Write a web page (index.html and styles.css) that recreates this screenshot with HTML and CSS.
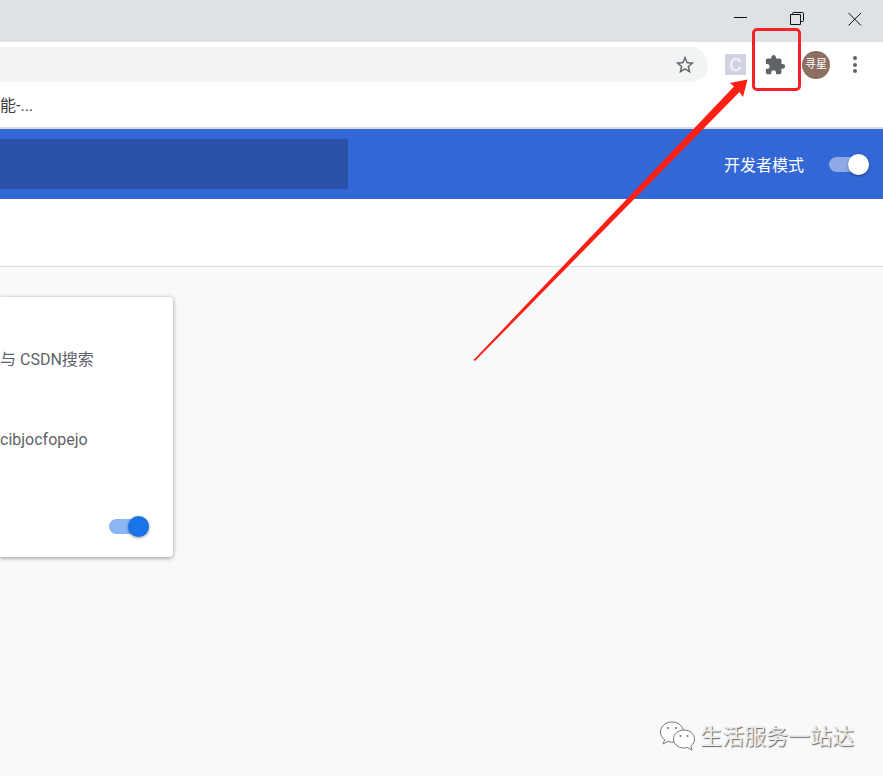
FILE: index.html
```html
<!DOCTYPE html>
<html lang="zh">
<head>
<meta charset="utf-8">
<title>扩展程序</title>
<link rel="stylesheet" href="styles.css">
</head>
<body>
<div class="page">
  <header class="titlebar">
    <button class="win-btn" aria-label="最小化">
      <svg width="14" height="14" viewBox="0 0 14 14"><path d="M0 5.500h13" class="win-stroke"/></svg>
    </button>
    <button class="win-btn" aria-label="还原">
      <svg width="14" height="14" viewBox="0 0 14 14"><path d="M-.5 2.500h10v10h-10z M1.500 2.500V1.500a1 1 0 0 1 1-1h9a1 1 0 0 1 1 1v7a1 1 0 0 1-1 1h-2" class="win-stroke"/></svg>
    </button>
    <button class="win-btn" aria-label="关闭">
      <svg width="14" height="14" viewBox="0 0 14 14"><path d="M.5 1l12.500 12.500M13 1L.5 13.500" class="win-stroke"/></svg>
    </button>
  </header>

  <div class="toolbar">
    <div class="omnibox">
      <svg class="star" width="22" height="22" viewBox="0 0 24 24"><path d="M22 9.240l-7.190-.62L12 2 9.190 8.630 2 9.240l5.460 4.730L5.820 21 12 17.270 18.180 21l-1.630-7.030L22 9.240zM12 15.400l-3.760 2.270 1-4.280-3.320-2.880 4.380-.38L12 6.100l1.710 4.040 4.380.38-3.320 2.880 1 4.280L12 15.400z"/></svg>
    </div>
    <div class="ext-c">C</div>
    <svg class="puzzle" width="22" height="22" viewBox="0 0 24 24"><path d="M20.500 11H19V7c0-1.100-.9-2-2-2h-4V3.500C13 2.120 11.880 1 10.500 1S8 2.120 8 3.500V5H4c-1.100 0-1.990.9-1.990 2v3.800H3.500c1.490 0 2.700 1.210 2.700 2.700s-1.210 2.700-2.700 2.700H2V20c0 1.100.9 2 2 2h3.800v-1.500c0-1.490 1.210-2.700 2.700-2.700 1.490 0 2.700 1.210 2.700 2.700V22H17c1.100 0 2-.9 2-2v-4h1.500c1.380 0 2.500-1.120 2.500-2.500S21.880 11 20.500 11z"/></svg>
    <div class="avatar">寻星</div>
    <div class="kebab"><i></i><i></i><i></i></div>
  </div>

  <div class="bookmarks">能-...</div>

  <div class="ext-header">
    <div class="search"></div>
    <div class="devmode">
      <span>开发者模式</span>
      <span class="toggle toggle-white"><i></i></span>
    </div>
  </div>

  <div class="subbar"></div>

  <main class="content">
    <article class="card">
      <p class="desc">与 CSDN搜索</p>
      <p class="ext-id">cibjocfopejo</p>
      <div class="card-foot">
        <span class="toggle toggle-blue"><i></i></span>
      </div>
    </article>
  </main>

  <div class="highlight"></div>
  <svg class="arrow" width="883" height="776" viewBox="0 0 883 776">
    <polygon points="473.500,360 734,86.500 730,83 747.500,79.500 743,97 739.500,92 475,361"/>
  </svg>

  <div class="watermark">
    <svg width="38" height="36" viewBox="0 0 38 36">
      <path d="M14 3C7.400 3 2.500 7.500 2.500 13c0 3.200 1.600 5.800 4.200 7.800L5 25l5-2.500c1.300.4 2.600.6 4 .6 6.600 0 11.500-4.500 11.500-10S20.600 3 14 3z" class="wm-bubble"/>
      <path d="M26 11c-5.800 0-10.500 4-10.500 9s4.700 9 10.500 9c1.200 0 2.400-.2 3.500-.5L34 31l-1.200-4c2.300-1.700 3.700-4.100 3.700-7 0-5-4.700-9-10.500-9z" class="wm-bubble"/>
      <circle cx="10" cy="9" r="1.100" class="wm-dot"/><circle cx="18" cy="9" r="1.100" class="wm-dot"/>
      <circle cx="22.500" cy="17" r="1.100" class="wm-dot"/><circle cx="29.500" cy="17" r="1.100" class="wm-dot"/>
    </svg>
    <span>生活服务一站达</span>
  </div>
</div>
</body>
</html>
```
FILE: styles.css
```css
* { box-sizing: border-box; }
html, body { margin: 0; padding: 0; }
body {
  font-family: Roboto, "Noto Sans CJK SC", sans-serif;
  background: #f8f9fa;
}
.page {
  position: relative;
  width: 883px;
  height: 776px;
  overflow: hidden;
  display: flex;
  flex-direction: column;
}
.titlebar {
  height: 42px;
  background: #dee1e6;
  display: flex;
  justify-content: flex-end;
  padding: 12px 21px 0 0;
  gap: 43px;
}
.win-btn {
  width: 14px;
  height: 14px;
  padding: 0;
  border: 0;
  background: none;
  display: block;
}
.win-btn svg { display: block; overflow: visible; }
.win-stroke { fill: none; stroke: #111; stroke-width: 1; }
.toolbar {
  height: 40px;
  padding-top: 5px;
  background: #fff;
  display: flex;
  align-items: center;
}
.omnibox {
  width: 708px;
  height: 35px;
  background: #f1f3f4;
  border-radius: 0 18px 18px 0;
  display: flex;
  align-items: center;
  justify-content: flex-end;
  padding-right: 12px;
}
.star { fill: #5f6368; display: block; }
.ext-c {
  width: 21px;
  height: 21px;
  margin-left: 17px;
  background: #d2d3e2;
  color: #f6f6fa;
  font-size: 19px;
  line-height: 21px;
  text-align: center;
}
.puzzle { fill: #5f6368; margin-left: 18px; display: block; }
.avatar {
  width: 28px;
  height: 28px;
  margin-left: 16px;
  border-radius: 50%;
  background: #8d6e63;
  color: #fff;
  font-size: 11px;
  line-height: 28px;
  text-align: center;
}
.kebab {
  margin-left: 23px;
  display: flex;
  flex-direction: column;
  gap: 2.500px;
}
.kebab i {
  display: block;
  width: 4px;
  height: 4px;
  border-radius: 50%;
  background: #5f6368;
}
.bookmarks {
  height: 45px;
  background: #fff;
  padding-top: 14px;
  font-size: 16px;
  line-height: 20px;
  color: #3c4043;
}
.ext-header {
  height: 72px;
  border-top: 2px solid #d9dadc;
  background: #3367d6;
  display: flex;
  align-items: center;
  justify-content: space-between;
  padding-right: 14px;
}
.search {
  width: 348px;
  height: 50px;
  background: #2a51a7;
  border-radius: 0 3px 3px 0;
}
.devmode {
  display: flex;
  align-items: center;
  gap: 25px;
  color: #fff;
  font-size: 16px;
}
.toggle {
  position: relative;
  display: block;
  height: 15px;
  border-radius: 8px;
}
.toggle i {
  position: absolute;
  right: 0;
  top: -3px;
  width: 21px;
  height: 21px;
  border-radius: 50%;
  box-shadow: 0 1px 3px rgba(0, 0, 0, .4);
}
.toggle-white { width: 40px; background: #8eaae6; }
.toggle-white i { background: #fff; }
.toggle-blue { width: 40px; background: #8ab6f4; }
.toggle-blue i { background: #1a73e8; }
.subbar {
  height: 68px;
  background: #fff;
  border-bottom: 1px solid #dadce0;
}
.content {
  flex: 1;
  padding-top: 30px;
}
.card {
  width: 173px;
  height: 260px;
  background: #fff;
  border-radius: 0 4px 4px 0;
  box-shadow: 0 1px 4px rgba(60, 64, 67, .55);
  color: #5f6368;
  padding-top: 52px;
  display: flex;
  flex-direction: column;
}
.desc { margin: 0; font-size: 16px; line-height: 22px; }
.ext-id { margin: 58px 0 0; font-size: 16px; line-height: 22px; }
.card-foot {
  margin-top: auto;
  padding: 0 24px 23px 0;
  display: flex;
  justify-content: flex-end;
}
.highlight {
  position: absolute;
  left: 752px;
  top: 28px;
  width: 49px;
  height: 63px;
  border: 3px solid #f5222a;
  border-radius: 5px;
}
.arrow {
  position: absolute;
  left: 0;
  top: 0;
  pointer-events: none;
}
.arrow polygon { fill: #fb1f14; }
.watermark {
  position: absolute;
  left: 658px;
  top: 719px;
  display: flex;
  align-items: center;
  gap: 4px;
  font-size: 22px;
  line-height: 36px;
  color: #ececec;
  text-shadow: 1px 1px 1px #666;
}
.watermark svg { display: block; }
.wm-bubble { fill: #fff; stroke: #777; stroke-width: 1; }
.wm-dot { fill: #777; }
```
